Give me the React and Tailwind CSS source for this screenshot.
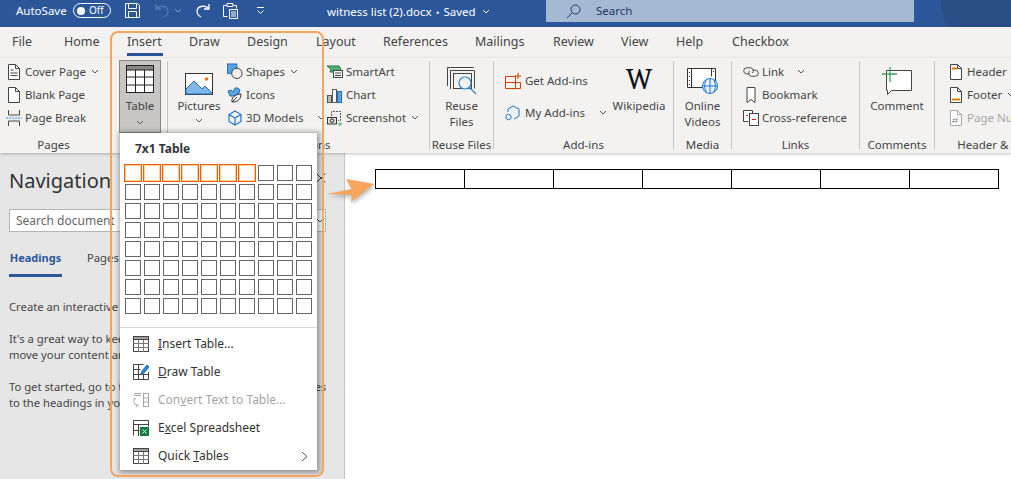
import React from 'react';

const Chev = ({ className = 'text-[#555]' }) => (
  <svg width="8" height="5" viewBox="0 0 8 5" className={className} fill="none" stroke="currentColor" strokeWidth="1">
    <path d="M1 1l3 3 3-3" />
  </svg>
);

const TableIcon = ({ dim }) => (
  <svg width="16" height="16" viewBox="0 0 16 16" fill="none" stroke={dim ? '#a5a5a5' : '#444'} strokeWidth="1">
    <rect x="0.5" y="0.5" width="15" height="15" fill="#fff" />
    <rect x="0.5" y="0.5" width="15" height="3" fill="#a0a0a0" />
    <path d="M0 7.500h16M0 11.500h16M5.500 4v12M10.500 4v12" stroke="#777" />
  </svg>
);

const PageIcon = ({ children, color = '#444' }) => (
  <svg width="16" height="18" viewBox="0 0 16 18" fill="none" stroke={color}>
    <path d="M2.500 1.500h7l4 4v11h-11zM9.500 1.500v4h4" fill="#fff" />
    {children}
  </svg>
);

const SmallRow = ({ icon, label, chev, dim, gap = 'gap-[3px]', chevGap = 'ml-[2px]' }) => (
  <div className={`flex items-center h-[23px] ${gap} ${dim ? 'text-[#a6a6a6]' : 'text-[#444]'}`}>
    <span className="w-[16px] h-[18px] flex items-center justify-center shrink-0">{icon}</span>
    <span className="whitespace-nowrap">{label}</span>
    {chev && <span className={`${chevGap} flex`}><Chev /></span>}
  </div>
);

const Group = ({ label, className, children }) => (
  <div className={`relative shrink-0 flex flex-col h-[88px] mt-[3px] border-r border-[#c8c6c4] ${className}`}>
    <div className="flex flex-1 min-h-0">{children}</div>
    <div className="absolute left-0 right-0 bottom-[-4px] text-center text-[11.5px] text-[#444] whitespace-nowrap">{label}</div>
  </div>
);

const Large = ({ icon, lines, chev, className = '' }) => (
  <div className={`flex flex-col shrink-0 items-center text-center text-[#444] leading-[16px] ${className}`}>
    <div className="h-[30px] mt-[4px] mb-[3px] flex items-end justify-center">{icon}</div>
    {lines.map((l) => <div key={l} className="whitespace-nowrap">{l}</div>)}
    {chev && <div className="mt-[4px] flex"><Chev /></div>}
  </div>
);

const tabs = ['File', 'Home', 'Insert', 'Draw', 'Design', 'Layout', 'References', 'Mailings', 'Review', 'View', 'Help', 'Checkbox'];

const MenuItem = ({ icon, children, dim, arrow }) => (
  <div className={`flex items-center h-[28px] pl-[13px] pr-[9px] text-[12px] ${dim ? 'text-[#a6a6a6]' : 'text-[#333]'}`}>
    <span className="w-[16px] h-[16px] flex mr-[9px]">{icon}</span>
    <span className="whitespace-nowrap">{children}</span>
    {arrow && (
      <svg className="ml-auto" width="7" height="11" viewBox="0 0 7 11" fill="none" stroke="#555">
        <path d="M1 1l5 4.500-5 4.500" />
      </svg>
    )}
  </div>
);

export default function App() {
  return (
    <div className="relative w-[1011px] h-[479px] overflow-hidden bg-white font-['Noto_Sans',sans-serif] text-[11.5px]">
      {/* title bar */}
      <div className="flex h-[27px] bg-[#2b579a] text-white relative overflow-hidden">
        <div className="absolute right-[-20px] top-[-30px] w-[90px] h-[70px] rounded-full bg-[#2a4f86]" />
        <div className="w-[546px] flex items-center h-[21px] pl-[16px] shrink-0 text-[11.5px]">
          <span className="w-[57px]">AutoSave</span>
          <span className="w-[38px] h-[15px] rounded-full border border-white flex items-center pl-[3px] gap-[4px] text-[10px]">
            <span className="w-[8px] h-[8px] rounded-full bg-white" />Off
          </span>
          <svg className="ml-[13px]" width="17" height="17" viewBox="0 0 17 17" fill="none" stroke="#fff">
            <path d="M1.500 1.500h12l2 2v12h-14zM4.500 1.500v5h8v-5M4.500 15.500v-6h8v6" />
          </svg>
          <svg className="ml-[13px] opacity-40" width="17" height="17" viewBox="0 0 17 17" fill="none" stroke="#8fb0e0" strokeWidth="1.300">
            <path d="M2 2v5h5M2 7c3-4 11-4 12 2 0 3-2 5-4 6" />
          </svg>
          <span className="ml-[3px] opacity-40 flex"><Chev className="text-white" /></span>
          <svg className="ml-[12px]" width="17" height="17" viewBox="0 0 17 17" fill="none" stroke="#fff" strokeWidth="1.300">
            <path d="M15 2v5h-5M15 7c-3-4-11-4-12 2 0 3 2 5 4 6" />
          </svg>
          <svg className="ml-[11px]" width="17" height="18" viewBox="0 0 17 18" fill="none" stroke="#fff">
            <path d="M4.500 3.500h-3v11h4M5 1.500h6v3H5zM11.500 3.500h3v3M7.500 7.500h8v9h-8zM9 10h5M9 12h5M9 14h5" />
          </svg>
          <svg className="ml-[17px]" width="9" height="8" viewBox="0 0 9 8" fill="none" stroke="#fff">
            <path d="M1 .5h7M1.500 3.500l3 3 3-3" />
          </svg>
          <div className="ml-[62px] mt-[2px] flex items-center text-[11.5px] whitespace-nowrap">
            <span>witness list (2).docx</span>
            <span className="ml-[5px] text-[8px]">▪</span>
            <span className="ml-[4px]">Saved</span>
            <span className="ml-[6px] flex"><Chev className="text-white" /></span>
          </div>
        </div>
        <div className="relative w-[368px] h-[22px] bg-[#a6b9d3] flex items-center pl-[20px] text-[#1f3864] text-[11.5px]">
          <svg width="15" height="15" viewBox="0 0 15 15" fill="none" stroke="#1f3864">
            <circle cx="9.500" cy="5.500" r="4.500" />
            <path d="M6 9l-5 5" />
          </svg>
          <span className="ml-[15px]">Search</span>
        </div>
      </div>

      {/* tabs */}
      <div className="bg-[#f3f2f1] h-[31px] pl-[12px] grid grid-cols-[52px_63px_62px_58px_69px_67px_92px_78px_68px_55px_56px_auto] text-[12.5px] text-[#444] items-center">
        {tabs.map((t) => (
          <div key={t} className="relative whitespace-nowrap">
            {t}
            {t === 'Insert' && <span className="absolute left-0 top-[20px] w-[36px] h-[3px] bg-[#2b579a]" />}
          </div>
        ))}
      </div>

      {/* ribbon */}
      <div className="flex bg-[#f3f2f1] h-[95px] shadow-[0_1px_3px_rgba(0,0,0,0.25)] relative z-10 overflow-hidden">
        <Group label="Pages" className="w-[107px] pl-[6px] border-r-0">
          <div className="flex flex-col -mt-[1px]">
            <SmallRow label="Cover Page" chev icon={<PageIcon><path d="M4.500 7h3M4.500 10h7M4.500 12.500h7" /></PageIcon>} />
            <SmallRow label="Blank Page" icon={<PageIcon />} />
            <SmallRow label="Page Break" icon={
              <svg width="16" height="16" viewBox="0 0 16 16" fill="none" stroke="#444">
                <path d="M2.500 0v5h11V0M2.500 16v-5h11v5" />
                <path d="M0 8h16" stroke="#2b88d8" strokeDasharray="2 1" />
              </svg>
            } />
          </div>
        </Group>
        <Group label="" className="w-[61px] pl-[12px]">
          <div className="w-[42px] h-[73px] -mt-[1px] bg-[#c8c6c4] border border-[#8a8886] flex flex-col items-center leading-[16px] text-[#444]">
            <svg className="mt-[4px] mb-[5px]" width="28" height="28" viewBox="0 0 28 28" fill="none" stroke="#222">
              <rect x="0.5" y="0.5" width="27" height="27" fill="#fff" />
              <rect x="0.5" y="0.5" width="27" height="4.500" fill="#8a8886" />
              <path d="M0 12h28M0 20h28M9.500 5v23M18.500 5v23" />
            </svg>
            <span>Table</span>
            <span className="mt-[6px] flex"><Chev /></span>
          </div>
        </Group>
        <Group label="Illustrations" className="w-[262px]">
          <Large className="w-[56px] ml-[3px]" lines={['Pictures']} chev icon={
            <svg width="28" height="22" viewBox="0 0 28 22" fill="none">
              <rect x="0.5" y="0.5" width="27" height="21" fill="#fff" stroke="#333" />
              <path d="M1 20V16L9 8l8 8 3-3 7 7v1H1z" fill="#7cb8ea" stroke="#2b6cb0" />
              <circle cx="21.500" cy="6" r="1.800" fill="#e8711a" />
            </svg>
          } />
          <div className="flex flex-col -mt-[1px] w-[100px] shrink-0">
            <SmallRow label="Shapes" chev icon={
              <svg width="17" height="17" viewBox="0 0 17 17" fill="none">
                <rect x="0.5" y="0.5" width="10" height="10" fill="#5ba3e0" stroke="#1e6cb5" />
                <circle cx="10.500" cy="10.500" r="5.500" fill="#f3f2f1" stroke="#333" />
              </svg>
            } />
            <SmallRow label="Icons" icon={
              <svg width="16" height="17" viewBox="0 0 16 17" fill="none">
                <path d="M1 5l3-1 2 2 2-4h3l2 2-1 3-5 3H3z" fill="#5ba3e0" stroke="#1e6cb5" />
                <path d="M5 16c-1-4 3-8 9-8 0 5-3 8-9 8zM5 16l5-5" fill="#f3f2f1" stroke="#333" />
              </svg>
            } />
            <SmallRow label="3D Models" chev chevGap="ml-[11px]" icon={
              <svg width="14" height="16" viewBox="0 0 14 16" fill="none" stroke="#1e78c8" strokeWidth="1.200">
                <path d="M7 1l6 3.500v7L7 15l-6-3.500v-7zM1 4.500l6 3.500 6-3.500M7 8v7" />
              </svg>
            } />
          </div>
          <div className="flex flex-col -mt-[1px] shrink-0">
            <SmallRow label="SmartArt" icon={
              <svg width="16" height="14" viewBox="0 0 16 14" fill="none">
                <path d="M0 1h12l2 3-2 3H3l1-3z" fill="#4caf6e" stroke="#2b7a49" />
                <rect x="6.500" y="5.500" width="9" height="7" fill="#fff" stroke="#444" />
                <path d="M8 8h6M8 10.500h6" stroke="#444" />
              </svg>
            } />
            <SmallRow label="Chart" icon={
              <svg width="16" height="16" viewBox="0 0 16 16" fill="none" stroke="#555">
                <rect x="0.5" y="8.500" width="4" height="7" fill="#bbb" />
                <rect x="5.500" y="2.500" width="4" height="13" fill="#fff" />
                <rect x="10.500" y="4.500" width="4" height="11" fill="#5ba3e0" stroke="#1e6cb5" />
              </svg>
            } />
            <SmallRow label="Screenshot" chev icon={
              <svg width="16" height="16" viewBox="0 0 16 16" fill="none" stroke="#555">
                <path d="M4.500 6V1.500h9v9H11" strokeDasharray="2 1" />
                <rect x="0.5" y="7.500" width="9" height="6.500" fill="#ddd" stroke="#333" />
                <circle cx="5" cy="10.700" r="1.700" stroke="#333" />
                <path d="M11 14h4M13 12v4" stroke="#4caf6e" />
              </svg>
            } />
          </div>
        </Group>
        <Group label="Reuse Files" className="w-[64px]">
          <Large className="w-full" lines={['Reuse', 'Files']} icon={
            <svg width="30" height="28" viewBox="0 0 30 28" fill="none" stroke="#444">
              <path d="M.5 19V.5h26M3.500 22V3.500h24v18" />
              <rect x="6.500" y="6.500" width="18" height="15" />
              <circle cx="18" cy="16" r="6" fill="#f3f2f1" stroke="#2b88d8" strokeWidth="1.200" />
              <path d="M22 20l7 7" stroke="#2b88d8" strokeWidth="1.200" />
            </svg>
          } />
        </Group>
        <Group label="Add-ins" className="w-[180px]">
          <div className="flex flex-col pl-[11px] pt-[8px] w-[116px] shrink-0">
            <SmallRow label="Get Add-ins" gap="gap-[4px]" icon={
              <svg width="16" height="16" viewBox="0 0 16 16" fill="none" stroke="#d83b01">
                <path d="M.5 3.500h10v12H.5zM.5 9.500h15v6h-5M10.500 9.500V3.500M13 0v6M10 3h6" />
              </svg>
            } />
            <div className="mt-[9px]">
              <SmallRow label="My Add-ins" chev chevGap="ml-[10px]" gap="gap-[4px]" icon={
                <svg width="16" height="16" viewBox="0 0 16 16" fill="none" stroke="#1e78c8">
                  <path d="M3 7V4l5-3 6 3v7l-5 3" />
                  <circle cx="3.500" cy="12" r="2.700" />
                </svg>
              } />
            </div>
          </div>
          <div className="w-[60px] shrink-0 flex flex-col items-center text-[#444] leading-[16px] ml-[-1px]">
            <div className="h-[30px] mt-[4px] mb-[3px] flex items-end font-serif font-normal text-[30px] leading-[30px] text-[#111]">W</div>
            <div>Wikipedia</div>
          </div>
        </Group>
        <Group label="Media" className="w-[58px]">
          <Large className="w-full" lines={['Online', 'Videos']} icon={
            <svg width="32" height="27" viewBox="0 0 32 27" fill="none" stroke="#333">
              <path d="M.5.5h28v19H.5z" fill="#fff" />
              <path d="M4.500.5v19M24.500.5v8M2.500 4v1M2.500 8v1M2.500 12v1M2.500 16v1M26.500 3v1" />
              <circle cx="23" cy="18" r="7.500" fill="#e7f1fb" stroke="#1e78c8" />
              <path d="M15.500 18h15M23 10.500v15M19.500 11.500c-2.500 4-2.500 9 0 13M26.500 11.500c2.500 4 2.500 9 0 13" stroke="#1e78c8" />
            </svg>
          } />
        </Group>
        <Group label="Links" className="w-[128px]">
          <div className="flex flex-col -mt-[1px] pl-[11px]">
            <SmallRow label="Link" chev chevGap="ml-[10px]" icon={
              <svg width="17" height="12" viewBox="0 0 17 12" fill="none" stroke="#444">
                <path d="M7 8H4a3.200 3.200 0 0 1 0-6.500h4a3.200 3.200 0 0 1 2 5.500" />
                <path d="M10 4h3a3.200 3.200 0 0 1 0 6.500H9a3.200 3.200 0 0 1-2-5.500" />
              </svg>
            } />
            <SmallRow label="Bookmark" icon={
              <svg width="10" height="16" viewBox="0 0 10 16" fill="none" stroke="#444">
                <path d="M1 .5h8v15l-4-3-4 3z" fill="#fff" />
              </svg>
            } />
            <SmallRow label="Cross-reference" icon={
              <svg width="16" height="16" viewBox="0 0 16 16" fill="none" stroke="#444">
                <path d="M5.500 11.500h-5v-11h9v3" fill="#fff" />
                <rect x="6.500" y="3.500" width="9" height="12" fill="#fff" />
                <path d="M3 5.500h2M9 9.500h4" stroke="#e81123" />
              </svg>
            } />
          </div>
        </Group>
        <Group label="Comments" className="w-[75px]">
          <Large className="w-full" lines={['Comment']} icon={
            <svg width="30" height="28" viewBox="0 0 30 28" fill="none" stroke="#444">
              <path d="M4.500 3.500h25v20H9.500l-4 4v-4h-1z" fill="#fff" />
              <path d="M0 7h15M8 0v15" stroke="#3da35d" strokeWidth="1.300" />
            </svg>
          } />
        </Group>
        <Group label="Header & Footer" className="w-[134px] border-r-0">
          <div className="flex flex-col -mt-[1px] pl-[13px]">
            <SmallRow label="Header" chev icon={<PageIcon><path d="M4 5.500h5" stroke="#e07c00" strokeWidth="2" /></PageIcon>} />
            <SmallRow label="Footer" chev icon={<PageIcon><path d="M4 13.500h8" stroke="#e07c00" strokeWidth="2" /></PageIcon>} />
            <SmallRow label="Page Number" dim icon={<PageIcon color="#aaa"><path d="M6 9l-1 5M9 9l-1 5M4.500 10.500h5.500M4 12.500h5.500" /></PageIcon>} />
          </div>
        </Group>
      </div>

      {/* body */}
      <div className="flex h-[326px]">
        <div className="w-[345px] shrink-0 bg-[#e6e6e6] border-r border-[#c8c6c4] pl-[9px] pr-[19px] text-[11.25px] text-[#444] leading-[16px]">
          <div className="flex items-center justify-between h-[28px] mt-[14px]">
            <span className="text-[20px] text-[#333]">Navigation</span>
            <svg className="mr-[-1px] mb-[6px]" width="10" height="10" viewBox="0 0 10 10" stroke="#444" fill="none">
              <path d="M.5.5l9 9M9.500.5l-9 9" />
            </svg>
          </div>
          <div className="flex items-center justify-between w-[317px] h-[23px] mt-[14px] bg-white border border-[#b5b5b5] pl-[6px] pr-[1px] text-[12px] text-[#666]">
            <span>Search document</span>
            <Chev />
          </div>
          <div className="flex mt-[18px] h-[27px]">
            <div className="w-[53px] h-[27px] mr-[25px] border-b-[3px] border-[#2b579a] font-bold text-[11px] text-[#2b579a] text-center">Headings</div>
            <div>Pages</div>
          </div>
          <p className="mt-[22px] whitespace-nowrap">Create an interactive outline of your document.</p>
          <p className="mt-[16px] whitespace-nowrap">It's a great way to keep track of where you are or quickly<br />move your content around.</p>
          <p className="mt-[16px] whitespace-nowrap">To get started, go to the Home tab and apply Heading styles<br />to the headings in your document.</p>
        </div>
        <div className="flex-1 pl-[30px] pt-[16px] bg-white">
          <div className="flex w-[624px] h-[20px] border border-black">
            {[0, 1, 2, 3, 4, 5, 6].map((i) => (
              <div key={i} className="flex-1 border-r border-black last:border-r-0" />
            ))}
          </div>
        </div>
      </div>

      {/* table dropdown */}
      <div className="absolute left-[120px] top-[133px] w-[197px] h-[337px] z-20 bg-white shadow-[1px_1px_5px_2px_rgba(0,0,0,0.35)]">
        <div className="pl-[15px] pt-[8px] h-[32px] text-[12px] font-bold text-[#333] leading-[16px]">7x1 Table</div>
        <div className="grid grid-cols-[repeat(10,16px)] gap-[3px] pl-[5px]">
          {Array.from({ length: 80 }).map((_, i) => (
            <div
              key={i}
              className={i < 7
                ? 'w-[16px] h-[16px] border border-[#fbd48a] outline outline-1 outline-[#f25a12] bg-white'
                : 'w-[16px] h-[16px] border border-[#666] bg-white'}
            />
          ))}
        </div>
        <div className="mt-[13px] mb-[2px] border-t border-[#d8d8d8]" />
        <MenuItem icon={<TableIcon />}><u>I</u>nsert Table...</MenuItem>
        <MenuItem icon={
          <svg width="16" height="16" viewBox="0 0 16 16" fill="none" stroke="#444">
            <path d="M10.500.5H.5v15h15V8M.5 5.500h7M.5 10.500h15M5.500.5v15M10.500 10v6" />
            <path d="M8 10l1-3 5-6 2 2-5 6z" fill="#2b88d8" stroke="#1e6cb5" />
          </svg>
        }><u>D</u>raw Table</MenuItem>
        <MenuItem dim icon={
          <svg width="16" height="16" viewBox="0 0 16 16" fill="none" stroke="#a6a6a6">
            <path d="M1 1.500h7M1 3.500h7M3 6.500H1v4c0 2 2 3 4 3M3 11.500l2 2-2 2" />
            <rect x="10.500" y="1.500" width="5" height="13" />
            <path d="M10 6h6M10 10h6" />
          </svg>
        }>Con<u>v</u>ert Text to Table...</MenuItem>
        <MenuItem icon={
          <svg width="16" height="16" viewBox="0 0 16 16" fill="none">
            <path d="M.5 15.500V.5h15v6M.5 4.500h15M.5 10.500h6M5.500 4v12" stroke="#444" />
            <rect x="7" y="7" width="9" height="9" fill="#107c41" />
            <path d="M9.500 9.500l4 4M13.500 9.500l-4 4" stroke="#fff" />
          </svg>
        }>E<u>x</u>cel Spreadsheet</MenuItem>
        <MenuItem arrow icon={<TableIcon />}>Quick <u>T</u>ables</MenuItem>
      </div>

      {/* orange annotation */}
      <div className="absolute left-[110px] top-[31px] w-[214px] h-[446px] z-30 border-2 border-[#f6a55c] rounded-[8px]" />
      <svg className="absolute left-[325px] top-[176px] z-30" width="52" height="28" viewBox="0 0 52 28">
        <path d="M49 8L21 3l6 10L2 18l25 1-1 7z" fill="#f6a55c" style={{ filter: 'drop-shadow(1px 2px 2px rgba(0,0,0,0.3))' }} />
      </svg>
    </div>
  );
}
